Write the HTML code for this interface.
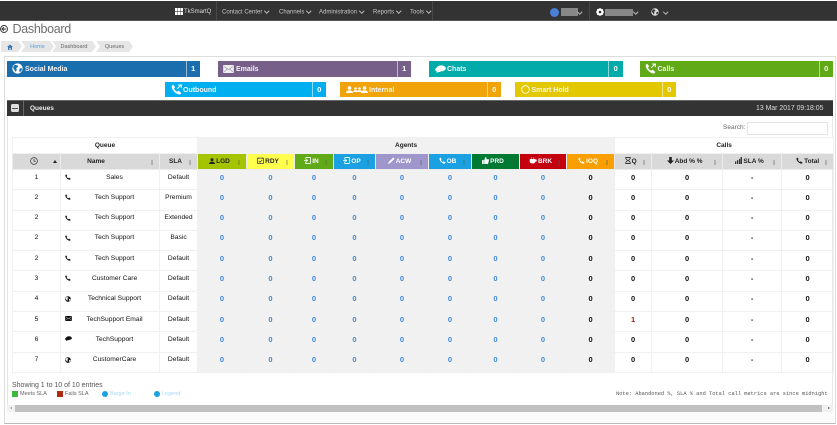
<!DOCTYPE html>
<html><head><meta charset="utf-8"><title>Dashboard</title>
<style>
html,body{margin:0;padding:0;background:#fff}
body{width:837px;height:425px;overflow:hidden;position:relative;font-family:"Liberation Sans",sans-serif;color:#333}
#w{position:absolute;left:0;top:0;width:837px;height:425px;filter:blur(.35px)}
.a{position:absolute;white-space:nowrap}
.nav{font-size:6px;color:#c8c8c8;top:8.5px;line-height:7px}
.car{display:inline-block;width:2.5px;height:2.5px;border-right:1px solid #bbb;border-bottom:1px solid #bbb;transform:rotate(45deg);margin:0 0 1px 3px}
.tile{position:absolute;height:15.5px;color:#fff;font-size:7px;font-weight:bold;line-height:15.5px}
.tile .n{position:absolute;right:0;top:0;bottom:0;width:13.5px;border-left:1px solid rgba(255,255,255,.55);text-align:center;font-size:7.5px;line-height:16.5px}
.tile .t{position:absolute;top:1px;color:#f4f4f4;font-weight:bold}
.tile svg{position:absolute;top:2.5px}
.bc{position:absolute;top:41px;height:11px;background:#e6e6e6;font-size:5.5px;line-height:12px;text-align:center;color:#666;clip-path:polygon(0 0,calc(100% - 4px) 0,100% 50%,calc(100% - 4px) 100%,0 100%,4px 50%)}
table{position:absolute;left:12px;top:137px;width:821px;border-collapse:collapse;table-layout:fixed;font-size:6.7px;color:#111}
td,th{padding:0;text-align:center;border:1px solid #f0f0f0;overflow:hidden}
.g th{height:14.5px;font-size:6.5px;color:#222;font-weight:bold;background:#fff}
.g th.ag{background:#f1f1f1}
.h th{height:16.5px;background:#d9d9d9;position:relative;font-size:6.5px;color:#222;font-weight:bold;border-color:#ececec;white-space:nowrap;padding-right:5px;box-sizing:border-box}
.h th.w{color:#fff}
.h th i{position:absolute;right:6px;top:6px;width:2px;height:5px;background:rgba(90,90,90,.3);display:block}
.h th svg{vertical-align:-1px;margin-right:1px}
tbody td{height:19.3px;vertical-align:top;padding-top:3.5px;box-sizing:border-box;line-height:8px;position:relative}
tbody tr{height:20.3px}
td.b{background:#f1f1f1;color:#3d8ad6;font-weight:bold;font-size:7.5px}
td.k{background:#f1f1f1;color:#111;font-weight:bold;font-size:7.5px}
td.c{color:#111;font-weight:bold;font-size:7.5px}
td.r{color:#a81818;font-weight:bold;font-size:7.5px}
td.nm{padding-left:9px;box-sizing:border-box}
td.nm svg{position:absolute;left:3.5px;top:4px}
</style></head><body><div id="w">

<svg width="0" height="0" style="position:absolute"><defs>
<symbol id="ph" viewBox="0 0 16 16"><path d="M3 1l3 3.5-1.6 2c.8 2 2.4 3.7 4.6 4.8l2-1.6L15 13c-.5 1.4-2 2.5-3.5 2.2C6.500 14 1.800 9 1 4.500.8 3 1.700 1.500 3 1z" fill="currentColor"/></symbol>
<symbol id="pa" viewBox="0 0 16 16"><path d="M3 1l3 3.5-1.6 2c.8 2 2.4 3.7 4.6 4.8l2-1.6L15 13c-.5 1.4-2 2.5-3.5 2.2C6.500 14 1.800 9 1 4.500.8 3 1.700 1.500 3 1z" fill="currentColor"/><path d="M9 7l5-5M10.500 1.500H15V6" fill="none" stroke="currentColor" stroke-width="1.500"/></symbol>
<symbol id="gl" viewBox="0 0 16 16"><circle cx="8" cy="8" r="7.500" fill="currentColor"/><path d="M4 2.500l4 1 1 2.500-3 1 1 3-1.500 3L3 9 1.500 6.500zM11 8l3-.5.500 2.500-2.500 3-1.500-1z" style="fill:var(--o,#fff)"/></symbol>
<symbol id="ml" viewBox="0 0 16 12"><rect width="16" height="12" rx="1" fill="currentColor"/><path d="M1.500 2L8 7l6.500-5M1.500 10.500L6 6M14.500 10.500L10 6" style="stroke:var(--o,#fff)" fill="none" stroke-width="1"/></symbol>
<symbol id="ct" viewBox="0 0 16 12"><ellipse cx="9" cy="5" rx="7" ry="4.500" fill="currentColor"/><ellipse cx="5" cy="7" rx="5" ry="3.500" fill="currentColor"/><path d="M3 9l-1 3 4-2z" fill="currentColor"/></symbol>
<symbol id="us" viewBox="0 0 12 12"><circle cx="6" cy="3.500" r="3" fill="currentColor"/><path d="M0 12c0-3 2.500-4.500 6-4.500s6 1.500 6 4.500z" fill="currentColor"/></symbol>
<symbol id="cl" viewBox="0 0 16 16"><circle cx="8" cy="8" r="6.800" fill="none" stroke="currentColor" stroke-width="1.400"/><path d="M8 4v4.500h3.500" fill="none" stroke="currentColor" stroke-width="1.400"/></symbol>
<symbol id="bx" viewBox="0 0 12 12"><path d="M1 2h10v9H1zM3 1v2M9 1v2M3 7l2 2 4-4" fill="none" stroke="currentColor" stroke-width="1.300"/></symbol>
<symbol id="io" viewBox="0 0 12 12"><path d="M3 1h8v10H3V8M3 4V1M0 6h6M4 4l2 2-2 2" fill="none" stroke="currentColor" stroke-width="1.400"/></symbol>
</defs></svg>

<!-- nav -->
<div class="a" style="left:0;top:1px;width:837px;height:19px;background:#333;border-bottom:1px solid #555;box-sizing:content-box"></div>
<svg class="a" style="left:175px;top:7.500px" width="8" height="7"><path d="M0 0h2.400v3H0zM2.800 0h2.400v3H2.800zM5.600 0H8v3H5.600zM0 3.600h2.400V7H0zM2.800 3.600h2.400V7H2.800zM5.600 3.600H8V7H5.600z" fill="#fff"/></svg>
<div class="a nav" style="left:184px;color:#ddd">TkSmartQ</div>
<div class="a" style="left:216px;top:1px;width:1px;height:19px;background:#484848"></div>
<div class="a nav" style="left:222px">Contact Center<span class="car"></span></div>
<div class="a nav" style="left:279px">Channels<span class="car"></span></div>
<div class="a nav" style="left:319px">Administration<span class="car"></span></div>
<div class="a nav" style="left:373px">Reports<span class="car"></span></div>
<div class="a nav" style="left:410px">Tools<span class="car"></span></div>
<div class="a" style="left:432px;top:1px;width:1px;height:19px;background:#484848"></div>
<div class="a" style="left:550px;top:7.500px;width:9px;height:9px;border-radius:50%;background:#4a7fd8"></div>
<div class="a" style="left:561px;top:8px;width:17px;height:8px;background:#888"></div>
<span class="a car" style="left:578px;top:9.500px;margin:0"></span>
<div class="a" style="left:589px;top:1px;width:1px;height:19px;background:#484848"></div>
<svg class="a" style="left:596px;top:8px" width="8" height="8" viewBox="0 0 8 8"><circle cx="4" cy="4" r="2.500" fill="none" stroke="#fff" stroke-width="2"/><path d="M4 0v8M0 4h8M1.200 1.200l5.600 5.600M6.800 1.200L1.200 6.800" stroke="#fff" stroke-width="1"/><circle cx="4" cy="4" r="1.300" fill="#333"/></svg>
<div class="a" style="left:605px;top:9px;width:28px;height:7px;background:#888"></div>
<span class="a car" style="left:634px;top:9.500px;margin:0"></span>
<svg class="a" style="left:651px;top:8px;color:#ddd;--o:#333" width="8" height="8"><use href="#gl"/></svg>
<span class="a car" style="left:664px;top:10px;margin:0"></span>

<!-- title -->
<svg class="a" style="left:0;top:24.500px" width="8" height="8" viewBox="0 0 8 8"><circle cx="4" cy="4" r="3.500" fill="none" stroke="#333" stroke-width=".9"/><path d="M6.200 4H2M3.800 2.200L2 4l1.800 1.800" fill="none" stroke="#333" stroke-width="1"/></svg>
<div class="a" style="left:12.500px;top:21px;font-size:12.500px;letter-spacing:-.3px;color:#6e6e6e;line-height:16px">Dashboard</div>

<!-- breadcrumb -->
<div class="bc" style="left:1px;width:21px;clip-path:polygon(0 0,calc(100% - 4px) 0,100% 50%,calc(100% - 4px) 100%,0 100%)"></div>
<svg class="a" style="left:7px;top:43.500px" width="6" height="6" viewBox="0 0 6 6"><path d="M3 .5L6 3H5v3H3.600V4H2.400v2H1V3H0z" fill="#3a7ab5"/></svg>
<div class="bc" style="left:21px;width:33px;color:#5b9bd5">Home</div>
<div class="bc" style="left:52px;width:44px">Dashboard</div>
<div class="bc" style="left:96px;width:37px">Queues</div>

<!-- panel -->
<div class="a" style="left:4px;top:56px;width:832px;height:368px;border:1px solid #ddd;border-bottom:1px solid #bbb;box-sizing:border-box;background:#fff"></div>

<!-- tiles -->
<div class="tile" style="left:7px;top:61px;width:193px;background:#1b6eae"><svg style="left:5px;top:2px;color:#fff;--o:#1b6eae" width="11" height="11"><use href="#gl"/></svg><span class="t" style="left:18px">Social Media</span><span class="n">1</span></div>
<div class="tile" style="left:218px;top:61px;width:193px;background:#76608a"><svg style="left:5px;top:3.500px;color:#eee;--o:#a897b5" width="11" height="8"><use href="#ml"/></svg><span class="t" style="left:18px">Emails</span><span class="n">1</span></div>
<div class="tile" style="left:428.500px;top:61px;width:194px;background:#00aba9"><svg style="left:6px;top:4px;color:#fff" width="11" height="8"><use href="#ct"/></svg><span class="t" style="left:18.500px">Chats</span><span class="n">0</span></div>
<div class="tile" style="left:639.500px;top:61px;width:193.500px;background:#60a917"><svg style="left:5.500px;top:2px;color:#fff" width="11" height="11"><use href="#pa"/></svg><span class="t" style="left:18px">Calls</span><span class="n">0</span></div>
<div class="tile" style="left:165px;top:81.500px;width:161px;background:#00aff0"><svg style="left:6px;top:2px;color:#fff" width="11" height="11"><use href="#pa"/></svg><span class="t" style="left:18px">Outbound</span><span class="n">0</span></div>
<div class="tile" style="left:340px;top:81.500px;width:161px;background:#f0a30a"><svg style="left:6px;top:4px;color:#fff" width="7" height="7"><use href="#us"/></svg><svg style="left:13px;top:5px;color:#fff" width="5" height="5"><use href="#us"/></svg><svg style="left:17px;top:5px;color:#fff" width="5" height="5"><use href="#us"/></svg><svg style="left:21px;top:4px;color:#fff" width="7" height="7"><use href="#us"/></svg><span class="t" style="left:29px">Internal</span><span class="n">0</span></div>
<div class="tile" style="left:515px;top:81.500px;width:161px;background:#e3c800"><svg style="left:5.500px;top:3px" width="9" height="9"><circle cx="4.500" cy="4.500" r="3.800" fill="none" stroke="#fff" stroke-width=".8"/></svg><span class="t" style="left:16.500px">Smart Hold</span><span class="n">0</span></div>

<!-- dark bar -->
<div class="a" style="left:7px;top:100px;width:826px;height:16px;background:#333;border-top:1px solid #666;box-sizing:border-box"></div>
<div class="a" style="left:23px;top:101px;width:1px;height:15px;background:#666"></div>
<div class="a" style="left:11px;top:104px;width:8px;height:8px;background:#ddd;border-radius:1.500px"></div>
<div class="a" style="left:12px;top:107.500px;width:6px;height:1px;background:#555"></div>
<div class="a" style="left:30px;top:104px;font-size:6.500px;font-weight:bold;color:#eee;line-height:9px">Queues</div>
<div class="a" style="left:756px;top:104px;font-size:6.900px;color:#ddd;line-height:9px">13 Mar 2017 09:18:05</div>

<!-- left edge line -->
<div class="a" style="left:7px;top:116px;width:1px;height:289px;background:#e4e4e4"></div>
<div class="a" style="left:832px;top:116px;width:1px;height:289px;background:#e8e8e8"></div>

<!-- search -->
<div class="a" style="left:723px;top:124px;font-size:6.500px;color:#666;line-height:8px">Search:</div>
<div class="a" style="left:747px;top:122px;width:81px;height:13px;border:1px solid #e4e4e4;box-sizing:border-box;background:#fff"></div>

<!-- table -->
<table>
<colgroup><col style="width:48px"><col style="width:99px"><col style="width:38px"><col style="width:49px"><col style="width:48px"><col style="width:39px"><col style="width:42px"><col style="width:53px"><col style="width:43px"><col style="width:48px"><col style="width:47px"><col style="width:48px"><col style="width:37px"><col style="width:71px"><col style="width:59px"><col style="width:52px"></colgroup>
<thead>
<tr class="g"><th colspan="3">Queue</th><th colspan="9" class="ag">Agents</th><th colspan="4">Calls</th></tr>
<tr class="h">
<th style="text-align:left;padding-left:17px"><svg style="color:#333;vertical-align:-2px" width="8" height="8"><use href="#cl"/></svg><span style="position:absolute;left:40px;top:6px;width:0;height:0;border:2px solid transparent;border-bottom:3px solid #222;border-top:0"></span></th>
<th style="padding-right:28px">Name<i></i></th>
<th style="padding-right:6px">SLA<i></i></th>
<th style="background:#a4c400"><svg style="color:#222" width="6" height="6"><use href="#us"/></svg>LGD<i></i></th>
<th style="background:#ffff4d"><svg style="color:#333" width="7" height="7"><use href="#bx"/></svg>RDY<i></i></th>
<th class="w" style="background:#60a917"><svg style="color:#fff" width="7" height="7"><use href="#io"/></svg>IN<i></i></th>
<th class="w" style="background:#1ba1e2"><svg style="color:#fff" width="7" height="7"><use href="#io"/></svg>OP<i></i></th>
<th class="w" style="background:#9f97cc"><svg width="7" height="7" viewBox="0 0 8 8"><path d="M0 8l1-2.500L6 .5 7.500 2l-5 5z" fill="#fff"/></svg>ACW<i></i></th>
<th class="w" style="background:#1ba1e2"><svg style="color:#fff" width="7" height="7"><use href="#ph"/></svg>OB<i></i></th>
<th class="w" style="background:#007a33"><svg width="7" height="7" viewBox="0 0 8 8"><path d="M0 3.500h2V8H0zM2.500 3.500L4 0c1 0 1.300.8 1 2.500h2.500c.6 0 .6.700.4 1.300L7 7.500c-.1.400-.4.500-.7.500H2.500z" fill="#fff"/></svg>PRD<i></i></th>
<th class="w" style="background:#c4000f"><svg width="8" height="7" viewBox="0 0 9 8"><path d="M1 2.500h6V5c0 1.500-1 2-2 2H3C2 7 1 6.500 1 5zM7 3h1.500v2H7M3 0v2M5 0v2" fill="#fff" stroke="#fff" stroke-width=".5"/></svg>BRK<i></i></th>
<th class="w" style="background:#fa9f00"><svg style="color:#fff" width="7" height="7"><use href="#ph"/></svg>IOQ<i></i></th>
<th><svg width="6" height="7" viewBox="0 0 6 8"><path d="M.5.500h5v1.500L3.500 4l2 2v1.500h-5V6l2-2-2-2z" fill="none" stroke="#222" stroke-width=".9"/></svg>Q<i></i></th>
<th><svg width="7" height="7" viewBox="0 0 8 8"><path d="M2.500 0h3v4H8L4 8 0 4h2.500z" fill="#222"/></svg>Abd % %<i></i></th>
<th><svg width="7" height="7" viewBox="0 0 8 8"><path d="M0 5h1.500v3H0zM2.300 3.500h1.500V8H2.300zM4.600 2h1.500v6H4.600zM6.500 0H8v8H6.500z" fill="#333"/></svg>SLA %<i></i></th>
<th style="padding-right:0"><svg style="color:#222" width="7" height="7"><use href="#ph"/></svg>Total<i></i></th>
</tr>
</thead>
<tbody>
<tr><td>1</td><td class="nm"><svg width="6" height="6" style="color:#111"><use href="#ph"/></svg>Sales</td><td>Default</td><td class="b">0</td><td class="b">0</td><td class="b">0</td><td class="b">0</td><td class="b">0</td><td class="b">0</td><td class="b">0</td><td class="b">0</td><td class="k">0</td><td class="c">0</td><td class="c">0</td><td class="c">-</td><td class="c">0</td></tr>
<tr><td>2</td><td class="nm"><svg width="6" height="6" style="color:#111"><use href="#ph"/></svg>Tech Support</td><td>Premium</td><td class="b">0</td><td class="b">0</td><td class="b">0</td><td class="b">0</td><td class="b">0</td><td class="b">0</td><td class="b">0</td><td class="b">0</td><td class="k">0</td><td class="c">0</td><td class="c">0</td><td class="c">-</td><td class="c">0</td></tr>
<tr><td>2</td><td class="nm"><svg width="6" height="6" style="color:#111"><use href="#ph"/></svg>Tech Support</td><td>Extended</td><td class="b">0</td><td class="b">0</td><td class="b">0</td><td class="b">0</td><td class="b">0</td><td class="b">0</td><td class="b">0</td><td class="b">0</td><td class="k">0</td><td class="c">0</td><td class="c">0</td><td class="c">-</td><td class="c">0</td></tr>
<tr><td>2</td><td class="nm"><svg width="6" height="6" style="color:#111"><use href="#ph"/></svg>Tech Support</td><td>Basic</td><td class="b">0</td><td class="b">0</td><td class="b">0</td><td class="b">0</td><td class="b">0</td><td class="b">0</td><td class="b">0</td><td class="b">0</td><td class="k">0</td><td class="c">0</td><td class="c">0</td><td class="c">-</td><td class="c">0</td></tr>
<tr><td>2</td><td class="nm"><svg width="6" height="6" style="color:#111"><use href="#ph"/></svg>Tech Support</td><td>Default</td><td class="b">0</td><td class="b">0</td><td class="b">0</td><td class="b">0</td><td class="b">0</td><td class="b">0</td><td class="b">0</td><td class="b">0</td><td class="k">0</td><td class="c">0</td><td class="c">0</td><td class="c">-</td><td class="c">0</td></tr>
<tr><td>3</td><td class="nm"><svg width="6" height="6" style="color:#111"><use href="#ph"/></svg>Customer Care</td><td>Default</td><td class="b">0</td><td class="b">0</td><td class="b">0</td><td class="b">0</td><td class="b">0</td><td class="b">0</td><td class="b">0</td><td class="b">0</td><td class="k">0</td><td class="c">0</td><td class="c">0</td><td class="c">-</td><td class="c">0</td></tr>
<tr><td>4</td><td class="nm"><svg width="6" height="6" style="color:#111"><use href="#gl"/></svg>Technical Support</td><td>Default</td><td class="b">0</td><td class="b">0</td><td class="b">0</td><td class="b">0</td><td class="b">0</td><td class="b">0</td><td class="b">0</td><td class="b">0</td><td class="k">0</td><td class="c">0</td><td class="c">0</td><td class="c">-</td><td class="c">0</td></tr>
<tr><td>5</td><td class="nm"><svg width="7" height="5" style="color:#111"><use href="#ml"/></svg>TechSupport Email</td><td>Default</td><td class="b">0</td><td class="b">0</td><td class="b">0</td><td class="b">0</td><td class="b">0</td><td class="b">0</td><td class="b">0</td><td class="b">0</td><td class="k">0</td><td class="r">1</td><td class="c">0</td><td class="c">-</td><td class="c">0</td></tr>
<tr><td>6</td><td class="nm"><svg width="7" height="5" style="color:#111"><use href="#ct"/></svg>TechSupport</td><td>Default</td><td class="b">0</td><td class="b">0</td><td class="b">0</td><td class="b">0</td><td class="b">0</td><td class="b">0</td><td class="b">0</td><td class="b">0</td><td class="k">0</td><td class="c">0</td><td class="c">0</td><td class="c">-</td><td class="c">0</td></tr>
<tr><td>7</td><td class="nm"><svg width="6" height="6" style="color:#111"><use href="#gl"/></svg>CustomerCare</td><td>Default</td><td class="b">0</td><td class="b">0</td><td class="b">0</td><td class="b">0</td><td class="b">0</td><td class="b">0</td><td class="b">0</td><td class="b">0</td><td class="k">0</td><td class="c">0</td><td class="c">0</td><td class="c">-</td><td class="c">0</td></tr>
</tbody>
</table>

<!-- footer -->
<div class="a" style="left:12px;top:381px;font-size:7px;color:#555;line-height:9px">Showing 1 to 10 of 10 entries</div>
<div class="a" style="left:12px;top:391px;width:6px;height:6px;background:#3cb83c"></div>
<div class="a" style="left:20px;top:390.500px;font-size:5.500px;color:#666;line-height:7px">Meets SLA</div>
<div class="a" style="left:57px;top:391px;width:6px;height:6px;background:#b02a10"></div>
<div class="a" style="left:65px;top:390.500px;font-size:5.500px;color:#666;line-height:7px">Fails SLA</div>
<div class="a" style="left:102px;top:391px;width:6px;height:6px;border-radius:50%;background:#1ba1e2"></div>
<div class="a" style="left:110px;top:390.500px;font-size:5.500px;color:#a8d8f0;line-height:7px">Barge In</div>
<div class="a" style="left:154px;top:391px;width:6px;height:6px;border-radius:50%;background:#1ba1e2"></div>
<div class="a" style="left:162px;top:390.500px;font-size:5.500px;color:#a8d8f0;line-height:7px">Legend</div>
<div class="a" style="left:616px;top:391px;font-family:'Liberation Mono',monospace;font-size:5.350px;color:#555;line-height:7px">Note: Abandoned %, SLA % and Total call metrics are since midnight</div>

<!-- scrollbar -->
<div class="a" style="left:7px;top:405px;width:826px;height:7px;background:#f1f1f1"></div>
<div class="a" style="left:15px;top:405px;width:807px;height:7px;background:#c1c1c1"></div>
<div class="a" style="left:10px;top:407px;width:0;height:0;border:1.500px solid transparent;border-right:2px solid #888;border-left:0"></div>
<div class="a" style="left:828px;top:407px;width:0;height:0;border:1.500px solid transparent;border-left:2px solid #555;border-right:0"></div>
<div class="a" style="left:7px;top:412px;width:826px;height:11px;background:#fbfbfb"></div>

</div></body></html>
